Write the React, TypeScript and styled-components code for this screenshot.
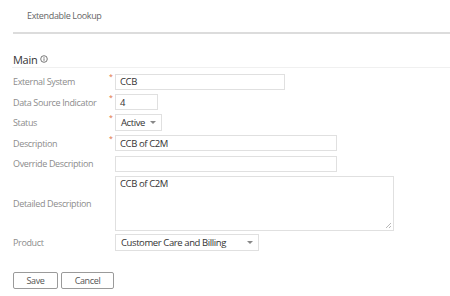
import styled, { createGlobalStyle } from "styled-components";

const GlobalStyle = createGlobalStyle`
  html, body {
    margin: 0;
    padding: 0;
    background: #fff;
    font-family: "Open Sans", "Liberation Sans", sans-serif;
  }
`;

const Page = styled.div`
  width: 450px;
  height: 296px;
  overflow: hidden;
`;

const TitleBar = styled.div`
  height: 34px;
  margin-left: 13px;
  padding-left: 14px;
  padding-bottom: 2px;
  display: flex;
  align-items: center;
  font-size: 9px;
  letter-spacing: -0.35px;
  color: #666;
  border-bottom: 2px solid #dcdcdc;
  box-sizing: border-box;
`;

const Section = styled.div`
  padding-left: 13px;
`;

const SectionHead = styled.div`
  display: flex;
  align-items: center;
  gap: 3px;
  height: 34px;
  padding-top: 17px;
  box-sizing: border-box;
  font-size: 11px;
  letter-spacing: -0.3px;
  color: #333;
  border-bottom: 1px solid #f0f0f0;
  margin-left: -1px;
  padding-left: 1px;
`;

const Form = styled.div`
  display: flex;
  flex-direction: column;
  gap: 3.5px;
  padding-top: 5px;
`;

const Row = styled.div<{ $h?: number }>`
  display: grid;
  grid-template-columns: 95px 7px 1fr;
  align-items: center;
  height: ${(p) => p.$h ?? 17}px;
`;

const Label = styled.div`
  font-size: 9px;
  letter-spacing: -0.35px;
  color: #8c8c8c;
  white-space: nowrap;
`;

const Req = styled.span`
  align-self: start;
  font-size: 7px;
  line-height: 8px;
  color: #e0703a;
  padding-left: 1px;
`;

const Input = styled.div<{ $w: number }>`
  width: ${(p) => p.$w}px;
  height: 16px;
  box-sizing: border-box;
  border: 1px solid #e0e0e0;
  font-size: 9.5px;
  letter-spacing: -0.4px;
  color: #333;
  padding-left: 4px;
  display: flex;
  align-items: center;
`;

const Select = styled(Input)`
  justify-content: space-between;
  padding-right: 5px;
  padding-left: 5px;
  height: 17px;
`;

const Caret = styled.span`
  width: 0;
  height: 0;
  border-left: 3px solid transparent;
  border-right: 3px solid transparent;
  border-top: 3px solid #888;
`;

const TextArea = styled.div`
  position: relative;
  width: 279px;
  height: 55px;
  box-sizing: border-box;
  border: 1px solid #e0e0e0;
  font-size: 9.5px;
  letter-spacing: -0.4px;
  color: #333;
  padding: 0 4px;
`;

const Grip = styled.svg`
  position: absolute;
  right: 1px;
  bottom: 1px;
`;

const Buttons = styled.div`
  display: flex;
  gap: 3px;
  padding-top: 21px;
`;

const Button = styled.button<{ $w: number }>`
  width: ${(p) => p.$w}px;
  height: 17px;
  box-sizing: border-box;
  border: 1px solid #9a9a9a;
  border-radius: 2px;
  background: #fff;
  font-family: inherit;
  font-size: 9px;
  letter-spacing: -0.35px;
  color: #555;
  padding: 0;
`;

export default function App() {
  return (
    <Page>
      <GlobalStyle />
      <TitleBar>Extendable Lookup</TitleBar>
      <Section>
        <SectionHead>
          Main
          <svg width="8" height="8" viewBox="0 0 8 8">
            <circle cx="4" cy="4" r="3.3" fill="none" stroke="#555" strokeWidth="0.8" />
            <rect x="3.6" y="3.3" width="0.8" height="2.5" fill="#555" />
            <rect x="3.6" y="2" width="0.8" height="0.8" fill="#555" />
          </svg>
        </SectionHead>
        <Form>
          <Row>
            <Label>External System</Label>
            <Req>*</Req>
            <Input $w={170}>CCB</Input>
          </Row>
          <Row>
            <Label>Data Source Indicator</Label>
            <Req>*</Req>
            <Input $w={43}>4</Input>
          </Row>
          <Row>
            <Label>Status</Label>
            <Req>*</Req>
            <Select $w={47}>
              Active
              <Caret />
            </Select>
          </Row>
          <Row>
            <Label>Description</Label>
            <Req>*</Req>
            <Input $w={222}>CCB of C2M</Input>
          </Row>
          <Row>
            <Label>Override Description</Label>
            <span />
            <Input $w={222} />
          </Row>
          <Row $h={55}>
            <Label>Detailed Description</Label>
            <span />
            <TextArea>
              CCB of C2M
              <Grip width="7" height="7" viewBox="0 0 7 7">
                <line x1="6" y1="1" x2="1" y2="6" stroke="#999" strokeWidth="0.7" />
                <line x1="6" y1="4" x2="4" y2="6" stroke="#999" strokeWidth="0.7" />
              </Grip>
            </TextArea>
          </Row>
          <Row>
            <Label>Product</Label>
            <span />
            <Select $w={144}>
              Customer Care and Billing
              <Caret />
            </Select>
          </Row>
        </Form>
        <Buttons>
          <Button $w={45}>Save</Button>
          <Button $w={53}>Cancel</Button>
        </Buttons>
      </Section>
    </Page>
  );
}
